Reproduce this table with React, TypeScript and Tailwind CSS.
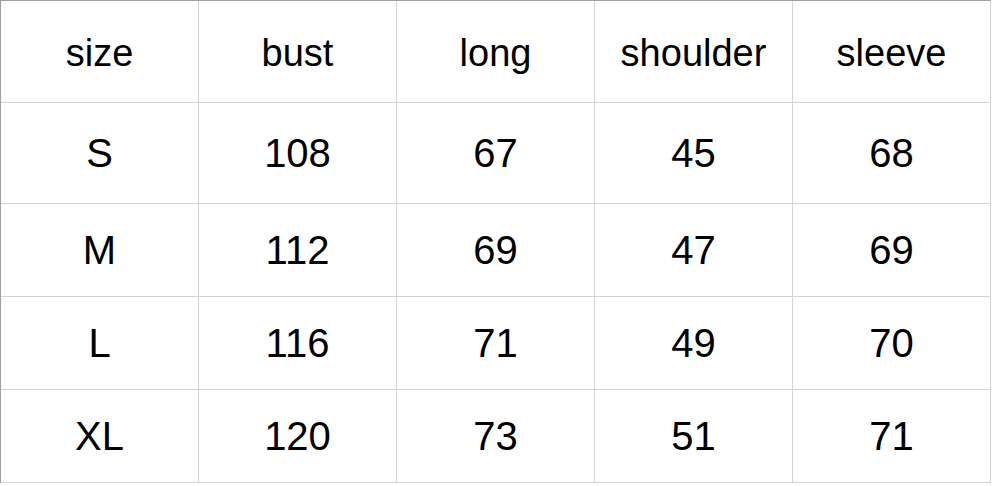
import React from "react";

const header = ["size", "bust", "long", "shoulder", "sleeve"];
const rows = [
  ["S", "108", "67", "45", "68"],
  ["M", "112", "69", "47", "69"],
  ["L", "116", "71", "49", "70"],
  ["XL", "120", "73", "51", "71"],
];

export default function App() {
  return (
    <div className="w-[993px] h-[486px] bg-white overflow-hidden" style={{ fontFamily: '"Liberation Sans", Arial, sans-serif' }}>
      <div className="w-fit border-l border-t border-[#a0a0a0]">
        <div className="grid grid-cols-[repeat(5,198px)] grid-rows-[102px_101px_93px_93px_93px] text-black">
          {header.map((h, i) => (
            <div key={"h" + i} className="border-r border-b border-[#d4d4d4] flex items-center justify-center pt-1 text-[38px]">
              {h}
            </div>
          ))}
          {rows.map((r, ri) =>
            r.map((c, ci) => (
              <div key={ri + "-" + ci} className="border-r border-b border-[#d4d4d4] flex items-center justify-center text-[40px]">
                {c}
              </div>
            ))
          )}
        </div>
      </div>
    </div>
  );
}
